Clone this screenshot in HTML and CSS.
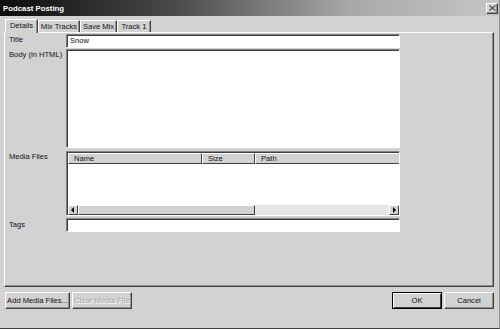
FILE: index.html
```html
<!DOCTYPE html>
<html lang="en">
  <head>
    <meta charset="UTF-8" />
    <title>Podcast Posting</title>
    <link rel="stylesheet" href="styles.css">
  </head>
  <body>
    <div class="window">
      <div class="titlebar">
        <span class="title">Podcast Posting</span>
        <span class="close">
          <svg width="7" height="6" viewBox="0 0 7 6"><path d="M0.5 0.5 L6.5 5.5 M6.5 0.5 L0.5 5.5" stroke="#505050" stroke-width="1.2" fill="none"/></svg>
        </span>
      </div>

      <div class="tabs">
        <div class="tab active">Details</div>
        <div class="tab tab-mix">Mix Tracks</div>
        <div class="tab tab-save">Save Mix</div>
        <div class="tab tab-one">Track 1</div>
      </div>

      <div class="panel">
        <div class="form">
          <label>Title</label>
          <div class="field input">Snow</div>

          <label>Body (in HTML)</label>
          <div class="field textarea"></div>

          <label>Media Files</label>
          <div class="field list">
            <div class="list-head">
              <div class="col name">Name</div>
              <div class="col size">Size</div>
              <div class="col path">Path</div>
            </div>
            <div class="list-body"></div>
            <div class="hscroll">
              <div class="arrow">
                <svg width="4" height="6" viewBox="0 0 4 6"><polygon points="3,0 3,6 0,3" fill="#000"/></svg>
              </div>
              <div class="thumb"></div>
              <div class="scroll-track"></div>
              <div class="arrow">
                <svg width="4" height="6" viewBox="0 0 4 6"><polygon points="1,0 1,6 4,3" fill="#000"/></svg>
              </div>
            </div>
          </div>

          <label>Tags</label>
          <div class="field input"></div>
        </div>
      </div>

      <div class="buttons">
        <div class="group">
          <button class="btn add">Add Media Files...</button>
          <button class="btn clear" disabled>Clear Media File</button>
        </div>
        <div class="group">
          <button class="btn ok">OK</button>
          <button class="btn cancel">Cancel</button>
        </div>
      </div>
    </div>
  </body>
</html>
```

FILE: styles.css
```css
* {
  margin: 0;
  box-sizing: border-box;
}

body {
  margin: 0;
  padding: 0;
  background: #d2d2d2;
  font-family: "Liberation Sans", Arial, sans-serif;
  font-size: 7.6px;
  color: #111;
}

.window {
  width: 500px;
  height: 329px;
  background: #d2d2d2;
  border-bottom: 1px solid #404040;
  border-right: 1px solid #909090;
}

.titlebar {
  height: 16px;
  display: flex;
  align-items: center;
  justify-content: space-between;
  padding: 0 1px 0 3px;
  background: linear-gradient(to right, #0c0c0c 0%, #4a4a4a 35%, #a8a8a8 70%, #c6c6c6 100%);
}

.title {
  color: #fff;
  font-weight: bold;
  font-size: 7.8px;
}

.close {
  width: 12px;
  height: 11px;
  display: flex;
  align-items: center;
  justify-content: center;
  background: #d2d2d2;
  border-top: 1px solid #fff;
  border-left: 1px solid #fff;
  border-right: 1px solid #404040;
  border-bottom: 1px solid #404040;
  box-shadow: inset -1px -1px #909090;
}

.tabs {
  display: flex;
  align-items: flex-end;
  height: 16px;
  padding-left: 5px;
}

.tab {
  height: 12px;
  line-height: 11px;
  text-align: center;
  border-top: 1px solid #fff;
  border-left: 1px solid #fff;
  border-right: 1px solid #404040;
  box-shadow: inset -1px 0 #909090;
  white-space: nowrap;
}

.tab.active {
  width: 33px;
  height: 14px;
  line-height: 12px;
  margin-bottom: -1px;
  background: #d2d2d2;
  position: relative;
  z-index: 1;
}

.tab-mix {
  width: 42px;
}

.tab-save {
  width: 37px;
}

.tab-one {
  width: 34px;
}

.panel {
  height: 255px;
  margin: 0 5px 0 4px;
  border-top: 1px solid #fff;
  border-left: 1px solid #fff;
  border-right: 1px solid #404040;
  border-bottom: 1px solid #404040;
  box-shadow: inset -1px -1px #909090;
  padding: 1px 0 0 4px;
}

.form {
  display: grid;
  grid-template-columns: 57px 334px;
  grid-template-rows: 14px 100px 67px 14px;
  row-gap: 1px;
}

.form label {
  padding-top: 1px;
  line-height: 10px;
}

.form label:nth-of-type(3),
.form label:nth-of-type(4) {
  margin-top: 1px;
}

.field {
  background: #fff;
  border-top: 1px solid #808080;
  border-left: 1px solid #808080;
  border-right: 1px solid #fff;
  border-bottom: 1px solid #fff;
  box-shadow: inset 1px 1px #404040;
}

.input {
  line-height: 12px;
  padding-left: 3px;
}

.textarea {
  margin-bottom: 1px;
}

.list {
  display: flex;
  flex-direction: column;
  margin: 1px 0 1px;
}

.list-head {
  display: flex;
  height: 11px;
  margin: 1px 0 0 1px;
}

.col {
  background: #d2d2d2;
  line-height: 10px;
  padding-left: 5px;
  border-top: 1px solid #fff;
  border-left: 1px solid #fff;
  border-right: 1px solid #404040;
  border-bottom: 1px solid #404040;
}

.col.name {
  width: 134px;
}

.col.size {
  width: 53px;
}

.col.path {
  flex: 1;
  border-right: none;
}

.list-body {
  flex: 1;
}

.hscroll {
  display: flex;
  height: 10px;
  margin: 0 0 0 1px;
}

.arrow {
  width: 10px;
  display: flex;
  align-items: center;
  justify-content: center;
  background: #d2d2d2;
  border-top: 1px solid #fff;
  border-left: 1px solid #fff;
  border-right: 1px solid #404040;
  border-bottom: 1px solid #404040;
}

.thumb {
  width: 177px;
  background: #d2d2d2;
  border-top: 1px solid #fff;
  border-left: 1px solid #fff;
  border-right: 1px solid #404040;
  border-bottom: 1px solid #404040;
}

.scroll-track {
  flex: 1;
  background: #e6e6e6;
}

.buttons {
  display: flex;
  justify-content: space-between;
  padding: 5px 5px 0 5px;
}

.group {
  display: flex;
  gap: 2px;
}

.btn {
  height: 17px;
  font-family: "Liberation Sans", Arial, sans-serif;
  font-size: 7.6px;
  color: #111;
  padding: 0;
  background: #d2d2d2;
  border-top: 1px solid #fff;
  border-left: 1px solid #fff;
  border-right: 1px solid #404040;
  border-bottom: 1px solid #404040;
  box-shadow: inset -1px -1px #909090;
}

.btn.add {
  width: 65px;
}

.btn.clear {
  width: 60px;
  color: #a4a4a4;
  text-shadow: 1px 1px #fff;
}

.btn.ok {
  width: 50px;
  border: 1px solid #000;
  box-shadow: inset 1px 1px #fff, inset -1px -1px #404040;
}

.btn.cancel {
  width: 50px;
}
```
